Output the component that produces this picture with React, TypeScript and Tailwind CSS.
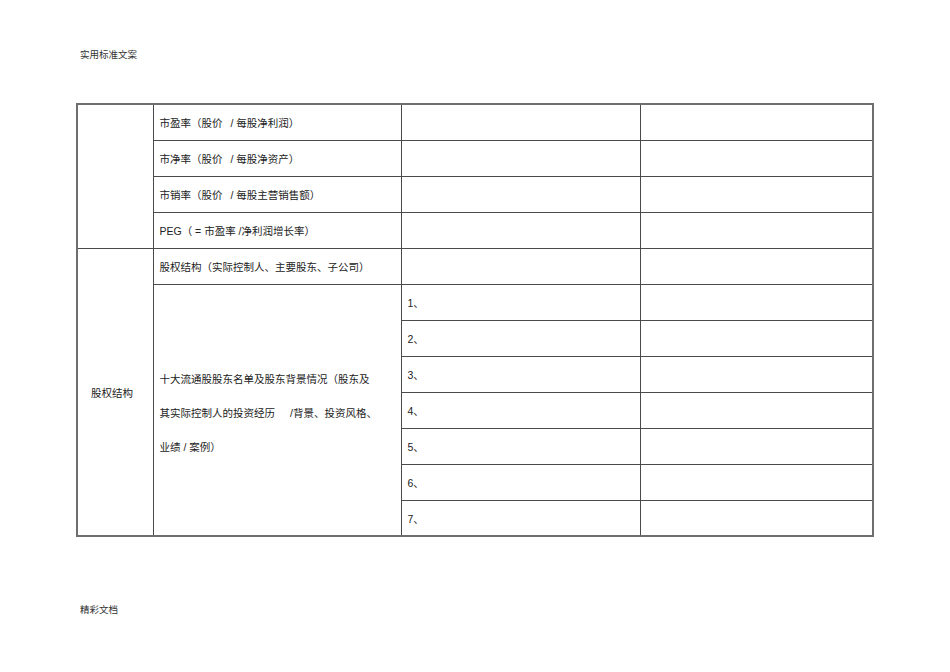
const cell = "border border-[#4a4a4a] p-0 align-middle";
const txt = "pl-[6px] pt-[4px] text-[10.5px] text-[#222] whitespace-nowrap";

function Gap({ w }: { w: string }) {
  return <span className={`inline-block ${w}`} />;
}

const metrics: React.ReactNode[] = [
  <>市盈率（股价<Gap w="w-[8px]" />/ 每股净利润）</>,
  <>市净率（股价<Gap w="w-[8px]" />/ 每股净资产）</>,
  <>市销率（股价<Gap w="w-[8px]" />/ 每股主营销售额）</>,
  <>PEG（ = 市盈率 /净利润增长率）</>,
];

export default function App() {
  return (
    <div
      className="w-[950px] h-[672px] bg-white overflow-hidden"
      style={{ fontFamily: '"Liberation Sans", "Noto Sans CJK SC", sans-serif' }}
    >
      <div className="h-[103px] pl-[80px] pt-[48px] text-[9.5px] leading-[14px] text-[#333]">
        实用标准文案
      </div>

      <table className="ml-[76px] border-collapse border-2 border-[#6e6e6e] table-fixed w-[796px]">
        <colgroup>
          <col className="w-[76px]" />
          <col className="w-[248px]" />
          <col className="w-[239px]" />
          <col className="w-[233px]" />
        </colgroup>
        <tbody>
          {metrics.map((m, i) => (
            <tr key={i} className="h-[36px]">
              {i === 0 && <td rowSpan={4} className={cell} />}
              <td className={cell}>
                <div className={txt}>{m}</div>
              </td>
              <td className={cell} />
              <td className={cell} />
            </tr>
          ))}
          <tr className="h-[36px]">
            <td rowSpan={8} className={cell}>
              <div className="pl-[13px] pt-[4px] text-[10.5px] text-[#222]">股权结构</div>
            </td>
            <td className={cell}>
              <div className={txt}>股权结构（实际控制人、主要股东、子公司）</div>
            </td>
            <td className={cell} />
            <td className={cell} />
          </tr>
          {[1, 2, 3, 4, 5, 6, 7].map((n) => (
            <tr key={n} className="h-[36px]">
              {n === 1 && (
                <td rowSpan={7} className={cell}>
                  <div className="pl-[6px] pt-[7px] text-[10.5px] leading-[34px] text-[#222] whitespace-nowrap">
                    十大流通股股东名单及股东背景情况（股东及
                    <br />
                    其实际控制人的投资经历<Gap w="w-[15px]" />/背景、投资风格、
                    <br />
                    业绩 / 案例）
                  </div>
                </td>
              )}
              <td className={cell}>
                <div className={txt}>{n}、</div>
              </td>
              <td className={cell} />
            </tr>
          ))}
        </tbody>
      </table>

      <div className="pl-[80px] pt-[66px] text-[9.5px] leading-[14px] text-[#333]">精彩文档</div>
    </div>
  );
}
